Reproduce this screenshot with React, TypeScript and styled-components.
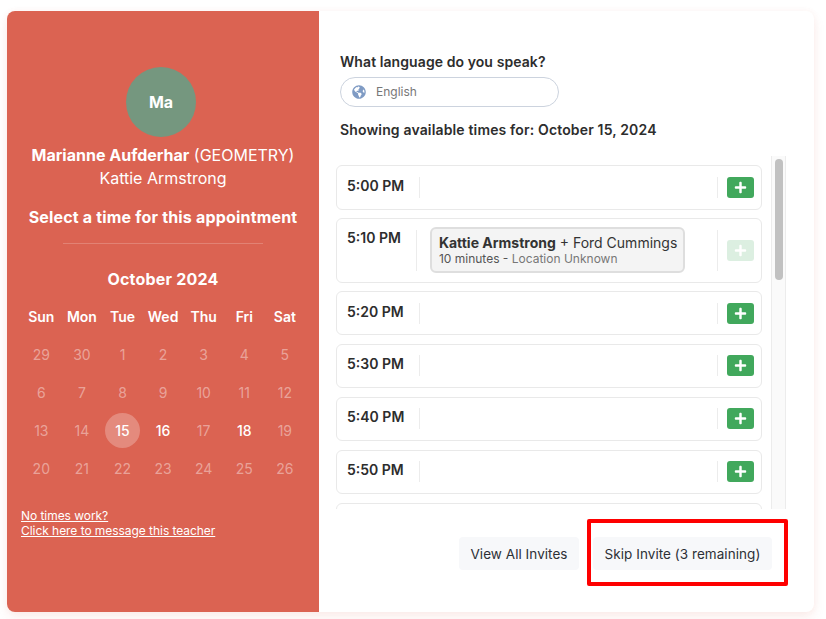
import React from "react";
import styled, { createGlobalStyle } from "styled-components";
import { FaGlobeAmericas, FaPlus } from "react-icons/fa";

const Global = createGlobalStyle`
  html, body { margin: 0; padding: 0; background: #fff; }
  body { font-family: Inter, "Noto Sans", sans-serif; color: #2d2d2d; }
  * { box-sizing: border-box; }
`;

const Page = styled.div`
  width: 826px;
  height: 619px;
  padding: 11px 12px 7px 7px;
  overflow: hidden;
`;

const Card = styled.div`
  display: flex;
  width: 807px;
  height: 601px;
  background: #fff;
  border-radius: 8px;
  box-shadow: 0 6px 12px rgba(219, 99, 82, 0.1), 0 0 6px rgba(219, 99, 82, 0.06);
`;

const Side = styled.aside`
  display: flex;
  flex-direction: column;
  align-items: center;
  flex: 0 0 312px;
  min-width: 0;
  padding: 56px 14px 0;
  background: #db6352;
  border-radius: 8px 0 0 8px;
  color: #fff;
`;

const Avatar = styled.div`
  display: flex;
  align-items: center;
  justify-content: center;
  width: 70px;
  height: 70px;
  margin-right: 4px;
  border-radius: 50%;
  background: #75977f;
  font-size: 16px;
  font-weight: 700;
`;

const NameLine = styled.div`
  margin-top: 7px;
  font-size: 16px;
  line-height: 23px;
  white-space: nowrap;
  & b { font-weight: 700; }
`;

const Teacher = styled.div`
  font-size: 16px;
  line-height: 23px;
`;

const Prompt = styled.h2`
  margin: 15px 0 0;
  font-size: 16px;
  line-height: 24px;
  font-weight: 700;
  letter-spacing: 0.18px;
  white-space: nowrap;
`;

const Rule = styled.hr`
  width: 200px;
  height: 1px;
  margin: 14px 0 0;
  border: 0;
  background: rgba(255, 255, 255, 0.2);
`;

const Month = styled.div`
  margin-top: 23px;
  font-size: 16px;
  line-height: 24px;
  font-weight: 700;
  letter-spacing: 0.2px;
`;

const Calendar = styled.div`
  display: grid;
  grid-template-columns: repeat(7, 40.6px);
  grid-auto-rows: 38px;
  align-self: flex-start;
  margin-top: 6px;
  width: 284px;
`;

const Weekday = styled.div`
  display: flex;
  align-items: center;
  justify-content: center;
  font-size: 14px;
  font-weight: 600;
`;

const Day = styled.div<{ $on?: boolean; $selected?: boolean }>`
  display: flex;
  align-items: center;
  justify-content: center;
  width: 35px;
  height: 35px;
  margin: 1.5px auto;
  border-radius: 50%;
  font-size: 14px;
  font-weight: ${(p) => (p.$on ? 500 : 400)};
  color: ${(p) => (p.$on ? "#fff" : "rgba(255,255,255,0.42)")};
  background: ${(p) => (p.$selected ? "rgba(255,255,255,0.25)" : "transparent")};
`;

const Help = styled.a`
  display: block;
  align-self: flex-start;
  margin-top: 21px;
  font-size: 12px;
  line-height: 15px;
  letter-spacing: -0.05px;
  color: #fff;
  text-decoration: underline;
`;

const Main = styled.main`
  display: flex;
  flex-direction: column;
  flex: 1;
  min-width: 0;
  padding: 41px 28px 0 21px;
`;

const Label = styled.div<{ $spacing: number }>`
  font-size: 14px;
  line-height: 20px;
  font-weight: 600;
  letter-spacing: ${(p) => p.$spacing}px;
  color: #2d2d2d;
`;

const LangField = styled.div`
  display: flex;
  align-items: center;
  gap: 10px;
  width: 219px;
  height: 30px;
  margin: 5px 0 13px;
  padding: 0 0 1px 11px;
  border: 1px solid #ccd3de;
  border-radius: 15px;
  font-size: 12px;
  color: #777;
  & svg { color: #7f9bc4; }
`;

const ListArea = styled.div`
  display: flex;
  flex: 0 0 353px;
  height: 353px;
  width: 450px;
  margin: 16px 0 0 -4px;
`;

const Rows = styled.div`
  display: flex;
  flex-direction: column;
  flex: 1;
  min-width: 0;
  padding: 9.2px 9px 0 0;
  overflow: hidden;
`;

const ScrollTrack = styled.div`
  flex: 0 0 15px;
  width: 15px;
  padding: 3px 2px 0 3px;
  background: #fafafa;
  border-left: 1px solid #ececec;
  border-right: 1px solid #ececec;
`;

const ScrollThumb = styled.div`
  width: 8px;
  height: 121px;
  border-radius: 4px;
  background: #c1c1c1;
`;

const Row = styled.div<{ $tall?: boolean }>`
  display: flex;
  flex: 0 0 ${(p) => (p.$tall ? "64.5px" : "44.4px")};
  margin-bottom: 8.5px;
  padding: 10.5px 7px 10.9px 10px;
  border: 1px solid #e9e9e9;
  border-radius: 6px;
  background: #fff;
`;

const Time = styled.div<{ $tall?: boolean }>`
  flex: none;
  padding-right: 15px;
  border-right: 1px solid #ececec;
  font-size: 14px;
  line-height: ${(p) => (p.$tall ? 16 : 18)}px;
  font-weight: 600;
  color: #2d2d2d;
`;

const Slot = styled.div`
  display: flex;
  align-items: center;
  flex: 1;
  min-width: 0;
  padding-left: 13px;
`;

const Appointment = styled.div`
  width: 255px;
  height: 46px;
  margin: -2.5px 0 -2.4px;
  padding: 5px 7px 3px;
  border: 2px solid #dedede;
  border-radius: 6px;
  background: #f4f4f4;
`;

const Who = styled.div`
  font-size: 14px;
  line-height: 18px;
  color: #333;
  white-space: nowrap;
  & b { font-weight: 700; }
`;

const Detail = styled.div`
  font-size: 12px;
  line-height: 14px;
  color: #555;
  white-space: nowrap;
`;

const Place = styled.span`
  color: #777;
`;

const Action = styled.div`
  display: flex;
  align-items: center;
  flex: none;
  padding-left: 9px;
  border-left: 1px solid #ececec;
`;

const AddButton = styled.button<{ $disabled?: boolean }>`
  display: flex;
  align-items: center;
  justify-content: center;
  width: 27px;
  height: 21px;
  padding: 0;
  border: 0;
  border-radius: 3px;
  color: #fff;
  background: #41a85c;
  opacity: ${(p) => (p.$disabled ? 0.18 : 1)};
`;

const Footer = styled.footer`
  display: flex;
  justify-content: flex-end;
  gap: 14px;
  margin-top: 28px;
  padding-right: 14px;
`;

const FooterButton = styled.button<{ $width: number }>`
  width: ${(p) => p.$width}px;
  height: 33px;
  padding: 0;
  border: 0;
  border-radius: 4px;
  background: #f7f8fa;
  font-family: inherit;
  font-size: 13.5px;
  letter-spacing: 0.05px;
  color: #2d3036;
  white-space: nowrap;
`;

const Highlighted = styled.div`
  position: relative;
`;

const Highlight = styled.div`
  position: absolute;
  top: -18px;
  right: -16px;
  bottom: -16px;
  left: -6px;
  border: 4px solid #fe0000;
  border-radius: 2px;
  pointer-events: none;
`;

const weekdays = ["Sun", "Mon", "Tue", "Wed", "Thu", "Fri", "Sat"];
const days = [29, 30, ...Array.from({ length: 26 }, (_, i) => i + 1)];
const times = ["5:00 PM", "5:10 PM", "5:20 PM", "5:30 PM", "5:40 PM", "5:50 PM"];

export default function App() {
  return (
    <Page>
      <Global />
      <Card>
        <Side>
          <Avatar>Ma</Avatar>
          <NameLine>
            <b>Marianne Aufderhar</b> (GEOMETRY)
          </NameLine>
          <Teacher>Kattie Armstrong</Teacher>
          <Prompt>Select a time for this appointment</Prompt>
          <Rule />
          <Month>October 2024</Month>
          <Calendar>
            {weekdays.map((d) => (
              <Weekday key={d}>{d}</Weekday>
            ))}
            {days.map((d) => (
              <Day key={d} $on={d === 15 || d === 16 || d === 18} $selected={d === 15}>
                {d}
              </Day>
            ))}
          </Calendar>
          <Help href="#">
            No times work?
            <br />
            Click here to message this teacher
          </Help>
        </Side>
        <Main>
          <Label $spacing={0.08}>What language do you speak?</Label>
          <LangField>
            <FaGlobeAmericas size={14} />
            <span>English</span>
          </LangField>
          <Label $spacing={0.15}>Showing available times for: October 15, 2024</Label>
          <ListArea>
            <Rows>
              {times.map((t, i) => (
                <Row key={t} $tall={i === 1}>
                  <Time $tall={i === 1}>{t}</Time>
                  <Slot>
                    {i === 1 && (
                      <Appointment>
                        <Who>
                          <b>Kattie Armstrong</b> + Ford Cummings
                        </Who>
                        <Detail>
                          10 minutes - <Place>Location Unknown</Place>
                        </Detail>
                      </Appointment>
                    )}
                  </Slot>
                  <Action>
                    <AddButton $disabled={i === 1} aria-label="Add">
                      <FaPlus size={13} />
                    </AddButton>
                  </Action>
                </Row>
              ))}
              <Row />
            </Rows>
            <ScrollTrack>
              <ScrollThumb />
            </ScrollTrack>
          </ListArea>
          <Footer>
            <FooterButton $width={120}>View All Invites</FooterButton>
            <Highlighted>
              <FooterButton $width={179}>Skip Invite (3 remaining)</FooterButton>
              <Highlight />
            </Highlighted>
          </Footer>
        </Main>
      </Card>
    </Page>
  );
}
